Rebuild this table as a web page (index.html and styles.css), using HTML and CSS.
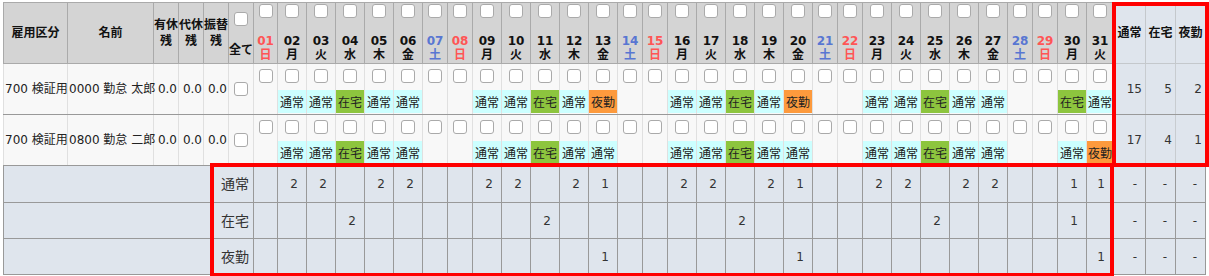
FILE: index.html
```html
<!DOCTYPE html>
<html lang="ja">
<head>
<meta charset="utf-8">
<title>勤務区分</title>
<link rel="stylesheet" href="styles.css">
</head>
<body>
<div class="page">
<table class="grid">
<colgroup>
<col class="w64"><col class="w86"><col class="w25"><col class="w25"><col class="w25"><col class="w25">
<col class="w24">
<col class="w29"><col class="w29"><col class="w29"><col class="w29"><col class="w29">
<col class="w25"><col class="w25">
<col class="w29"><col class="w29"><col class="w29"><col class="w29"><col class="w29">
<col class="w25"><col class="w25">
<col class="w29"><col class="w29"><col class="w29"><col class="w29"><col class="w29">
<col class="w25"><col class="w25">
<col class="w29"><col class="w29"><col class="w29"><col class="w29"><col class="w29">
<col class="w25"><col class="w25">
<col class="w29"><col class="w27">
<col class="w32"><col class="w30"><col class="w30">
</colgroup>
<thead>
<tr class="hd">
<th class="htxt">雇用区分</th>
<th class="htxt">名前</th>
<th class="htxt hrem">有休<br>残</th>
<th class="htxt hrem">代休<br>残</th>
<th class="htxt hrem">振替<br>残</th>
<th class="hall"><input class="cb" type="checkbox"><span class="at">全て</span></th>
<th class="hday sun"><input class="cb" type="checkbox"><span class="dt">01<br>日</span></th>
<th class="hday"><input class="cb" type="checkbox"><span class="dt">02<br>月</span></th>
<th class="hday"><input class="cb" type="checkbox"><span class="dt">03<br>火</span></th>
<th class="hday"><input class="cb" type="checkbox"><span class="dt">04<br>水</span></th>
<th class="hday"><input class="cb" type="checkbox"><span class="dt">05<br>木</span></th>
<th class="hday"><input class="cb" type="checkbox"><span class="dt">06<br>金</span></th>
<th class="hday sat"><input class="cb" type="checkbox"><span class="dt">07<br>土</span></th>
<th class="hday sun"><input class="cb" type="checkbox"><span class="dt">08<br>日</span></th>
<th class="hday"><input class="cb" type="checkbox"><span class="dt">09<br>月</span></th>
<th class="hday"><input class="cb" type="checkbox"><span class="dt">10<br>火</span></th>
<th class="hday"><input class="cb" type="checkbox"><span class="dt">11<br>水</span></th>
<th class="hday"><input class="cb" type="checkbox"><span class="dt">12<br>木</span></th>
<th class="hday"><input class="cb" type="checkbox"><span class="dt">13<br>金</span></th>
<th class="hday sat"><input class="cb" type="checkbox"><span class="dt">14<br>土</span></th>
<th class="hday sun"><input class="cb" type="checkbox"><span class="dt">15<br>日</span></th>
<th class="hday"><input class="cb" type="checkbox"><span class="dt">16<br>月</span></th>
<th class="hday"><input class="cb" type="checkbox"><span class="dt">17<br>火</span></th>
<th class="hday"><input class="cb" type="checkbox"><span class="dt">18<br>水</span></th>
<th class="hday"><input class="cb" type="checkbox"><span class="dt">19<br>木</span></th>
<th class="hday"><input class="cb" type="checkbox"><span class="dt">20<br>金</span></th>
<th class="hday sat"><input class="cb" type="checkbox"><span class="dt">21<br>土</span></th>
<th class="hday sun"><input class="cb" type="checkbox"><span class="dt">22<br>日</span></th>
<th class="hday"><input class="cb" type="checkbox"><span class="dt">23<br>月</span></th>
<th class="hday"><input class="cb" type="checkbox"><span class="dt">24<br>火</span></th>
<th class="hday"><input class="cb" type="checkbox"><span class="dt">25<br>水</span></th>
<th class="hday"><input class="cb" type="checkbox"><span class="dt">26<br>木</span></th>
<th class="hday"><input class="cb" type="checkbox"><span class="dt">27<br>金</span></th>
<th class="hday sat"><input class="cb" type="checkbox"><span class="dt">28<br>土</span></th>
<th class="hday sun"><input class="cb" type="checkbox"><span class="dt">29<br>日</span></th>
<th class="hday"><input class="cb" type="checkbox"><span class="dt">30<br>月</span></th>
<th class="hday"><input class="cb" type="checkbox"><span class="dt">31<br>火</span></th>
<th class="hsum">通常</th>
<th class="hsum">在宅</th>
<th class="hsum">夜勤</th>
</tr>
</thead>
<tbody>
<tr class="row">
<td class="tkbn">700 検証用</td>
<td class="tname">0000 勤怠 太郎</td>
<td class="tnum">0.0</td><td class="tnum">0.0</td><td class="tnum">0.0</td>
<td class="tall"><input class="cb" type="checkbox"></td>
<td class="dd"><input class="cb" type="checkbox"></td>
<td class="dd"><input class="cb" type="checkbox"><span class="bd bn">通常</span></td>
<td class="dd"><input class="cb" type="checkbox"><span class="bd bn">通常</span></td>
<td class="dd"><input class="cb" type="checkbox"><span class="bd bh">在宅</span></td>
<td class="dd"><input class="cb" type="checkbox"><span class="bd bn">通常</span></td>
<td class="dd"><input class="cb" type="checkbox"><span class="bd bn">通常</span></td>
<td class="dd"><input class="cb" type="checkbox"></td>
<td class="dd"><input class="cb" type="checkbox"></td>
<td class="dd"><input class="cb" type="checkbox"><span class="bd bn">通常</span></td>
<td class="dd"><input class="cb" type="checkbox"><span class="bd bn">通常</span></td>
<td class="dd"><input class="cb" type="checkbox"><span class="bd bh">在宅</span></td>
<td class="dd"><input class="cb" type="checkbox"><span class="bd bn">通常</span></td>
<td class="dd"><input class="cb" type="checkbox"><span class="bd by">夜勤</span></td>
<td class="dd"><input class="cb" type="checkbox"></td>
<td class="dd"><input class="cb" type="checkbox"></td>
<td class="dd"><input class="cb" type="checkbox"><span class="bd bn">通常</span></td>
<td class="dd"><input class="cb" type="checkbox"><span class="bd bn">通常</span></td>
<td class="dd"><input class="cb" type="checkbox"><span class="bd bh">在宅</span></td>
<td class="dd"><input class="cb" type="checkbox"><span class="bd bn">通常</span></td>
<td class="dd"><input class="cb" type="checkbox"><span class="bd by">夜勤</span></td>
<td class="dd"><input class="cb" type="checkbox"></td>
<td class="dd"><input class="cb" type="checkbox"></td>
<td class="dd"><input class="cb" type="checkbox"><span class="bd bn">通常</span></td>
<td class="dd"><input class="cb" type="checkbox"><span class="bd bn">通常</span></td>
<td class="dd"><input class="cb" type="checkbox"><span class="bd bh">在宅</span></td>
<td class="dd"><input class="cb" type="checkbox"><span class="bd bn">通常</span></td>
<td class="dd"><input class="cb" type="checkbox"><span class="bd bn">通常</span></td>
<td class="dd"><input class="cb" type="checkbox"></td>
<td class="dd"><input class="cb" type="checkbox"></td>
<td class="dd"><input class="cb" type="checkbox"><span class="bd bh">在宅</span></td>
<td class="dd"><input class="cb" type="checkbox"><span class="bd bn">通常</span></td>
<td class="tcnt">15</td><td class="tcnt">5</td><td class="tcnt">2</td>
</tr>
<tr class="row">
<td class="tkbn">700 検証用</td>
<td class="tname">0800 勤怠 二郎</td>
<td class="tnum">0.0</td><td class="tnum">0.0</td><td class="tnum">0.0</td>
<td class="tall"><input class="cb" type="checkbox"></td>
<td class="dd"><input class="cb" type="checkbox"></td>
<td class="dd"><input class="cb" type="checkbox"><span class="bd bn">通常</span></td>
<td class="dd"><input class="cb" type="checkbox"><span class="bd bn">通常</span></td>
<td class="dd"><input class="cb" type="checkbox"><span class="bd bh">在宅</span></td>
<td class="dd"><input class="cb" type="checkbox"><span class="bd bn">通常</span></td>
<td class="dd"><input class="cb" type="checkbox"><span class="bd bn">通常</span></td>
<td class="dd"><input class="cb" type="checkbox"></td>
<td class="dd"><input class="cb" type="checkbox"></td>
<td class="dd"><input class="cb" type="checkbox"><span class="bd bn">通常</span></td>
<td class="dd"><input class="cb" type="checkbox"><span class="bd bn">通常</span></td>
<td class="dd"><input class="cb" type="checkbox"><span class="bd bh">在宅</span></td>
<td class="dd"><input class="cb" type="checkbox"><span class="bd bn">通常</span></td>
<td class="dd"><input class="cb" type="checkbox"><span class="bd bn">通常</span></td>
<td class="dd"><input class="cb" type="checkbox"></td>
<td class="dd"><input class="cb" type="checkbox"></td>
<td class="dd"><input class="cb" type="checkbox"><span class="bd bn">通常</span></td>
<td class="dd"><input class="cb" type="checkbox"><span class="bd bn">通常</span></td>
<td class="dd"><input class="cb" type="checkbox"><span class="bd bh">在宅</span></td>
<td class="dd"><input class="cb" type="checkbox"><span class="bd bn">通常</span></td>
<td class="dd"><input class="cb" type="checkbox"><span class="bd bn">通常</span></td>
<td class="dd"><input class="cb" type="checkbox"></td>
<td class="dd"><input class="cb" type="checkbox"></td>
<td class="dd"><input class="cb" type="checkbox"><span class="bd bn">通常</span></td>
<td class="dd"><input class="cb" type="checkbox"><span class="bd bn">通常</span></td>
<td class="dd"><input class="cb" type="checkbox"><span class="bd bh">在宅</span></td>
<td class="dd"><input class="cb" type="checkbox"><span class="bd bn">通常</span></td>
<td class="dd"><input class="cb" type="checkbox"><span class="bd bn">通常</span></td>
<td class="dd"><input class="cb" type="checkbox"></td>
<td class="dd"><input class="cb" type="checkbox"></td>
<td class="dd"><input class="cb" type="checkbox"><span class="bd bn">通常</span></td>
<td class="dd"><input class="cb" type="checkbox"><span class="bd by">夜勤</span></td>
<td class="tcnt">17</td><td class="tcnt">4</td><td class="tcnt">1</td>
</tr>
</tbody>
<tfoot>
<tr class="sm s1">
<th class="slab" colspan="6">通常</th>
<td></td><td>2</td><td>2</td><td></td><td>2</td><td>2</td><td></td><td></td>
<td>2</td><td>2</td><td></td><td>2</td><td>1</td><td></td><td></td>
<td>2</td><td>2</td><td></td><td>2</td><td>1</td><td></td><td></td>
<td>2</td><td>2</td><td></td><td>2</td><td>2</td><td></td><td></td>
<td>1</td><td>1</td>
<td>-</td><td>-</td><td>-</td>
</tr>
<tr class="sm">
<th class="slab" colspan="6">在宅</th>
<td></td><td></td><td></td><td>2</td><td></td><td></td><td></td><td></td>
<td></td><td></td><td>2</td><td></td><td></td><td></td><td></td>
<td></td><td></td><td>2</td><td></td><td></td><td></td><td></td>
<td></td><td></td><td>2</td><td></td><td></td><td></td><td></td>
<td>1</td><td></td>
<td>-</td><td>-</td><td>-</td>
</tr>
<tr class="sm">
<th class="slab" colspan="6">夜勤</th>
<td></td><td></td><td></td><td></td><td></td><td></td><td></td><td></td>
<td></td><td></td><td></td><td></td><td>1</td><td></td><td></td>
<td></td><td></td><td></td><td></td><td>1</td><td></td><td></td>
<td></td><td></td><td></td><td></td><td></td><td></td><td></td>
<td></td><td>1</td>
<td>-</td><td>-</td><td>-</td>
</tr>
</tfoot>
</table>
<div class="mark mark-sum"></div>
<div class="mark mark-total"></div>
</div>
</body>
</html>
```

FILE: styles.css
```css
* { box-sizing: border-box; }
html, body { margin: 0; padding: 0; background: #fff; }
body {
  font-family: "DejaVu Sans", "Noto Sans CJK JP", sans-serif;
  font-size: 12px;
  color: #222;
}
.page {
  position: relative;
  width: 1209px;
  height: 276px;
  overflow: hidden;
  padding: 2px 0 0 3px;
}
.grid {
  border-collapse: collapse;
  table-layout: fixed;
  width: 1202px;
}
.w24 { width: 24px; }
.w25 { width: 25px; }
.w27 { width: 27px; }
.w29 { width: 29px; }
.w30 { width: 30px; }
.w32 { width: 32px; }
.w64 { width: 64px; }
.w86 { width: 86px; }

.grid th, .grid td {
  padding: 0;
  line-height: 14px;
  white-space: nowrap;
}

/* header */
.hd { height: 61px; }
.hd th {
  background: #d4d4d4;
  border: 1px solid #aaa;
  font-weight: bold;
  color: #111;
  text-align: center;
}
.htxt { vertical-align: middle; }
.hrem { line-height: 16px !important; }
.hall, .hday { vertical-align: top; }

.cb {
  -webkit-appearance: none;
  appearance: none;
  display: block;
  width: 14px;
  height: 14px;
  margin: 0 auto;
  border: 1px solid #aaa;
  border-radius: 3px;
  background: #fff;
}
.hday .cb { margin-top: 1px; }
.hday .dt { display: block; margin-top: 16px; }
.hall .cb { margin-top: 9px; }
.hall .at { display: block; margin-top: 17px; }
.hd .sun { color: #f55; }
.hd .sat { color: #5876d2; }
.hd .hsum {
  background: #dfe5ed;
  border-color: #c4c8cc;
  vertical-align: middle;
}

/* data rows */
.row { height: 51px; }
.row td {
  background: #f8f8f8;
  border: 1px solid #e0e0e0;
  border-bottom-color: #999;
  vertical-align: middle;
}
.tkbn { padding-left: 1px !important; }
.tname { padding-left: 1px !important; }
.tnum { text-align: right; padding-right: 1px !important; }
.row .dd { vertical-align: top; }
.dd .cb { margin-top: 5px; }
.bd {
  display: block;
  height: 23px;
  margin-top: 7px;
  padding-top: 4px;
  line-height: 19px;
  text-align: center;
  color: #222;
}
.bn { background: #ccffff; }
.bh { background: #8dc53e; }
.by { background: #fd9a3d; }
.row .tcnt {
  background: #dfe5ed;
  border-color: #c8ccd0;
  border-bottom-color: #999;
  text-align: right;
  padding-right: 3px;
  color: #333;
}

/* summary rows */
.sm { height: 36px; }
.sm.s1 { height: 37px; }
.sm th, .sm td {
  background: #dfe5ed;
  border: 1px solid #999;
  vertical-align: middle;
  text-align: right;
  padding-right: 8px;
  color: #333;
  font-weight: normal;
}
.sm .slab {
  font-size: 14px;
  padding-right: 4px;
}

/* highlight marks drawn over the grid */
.mark {
  position: absolute;
  border: 4px solid #f00;
  pointer-events: none;
}
.mark-sum { left: 1112px; top: 2px; width: 97px; height: 165px; }
.mark-total { left: 210px; top: 163px; width: 904px; height: 114px; }
```
